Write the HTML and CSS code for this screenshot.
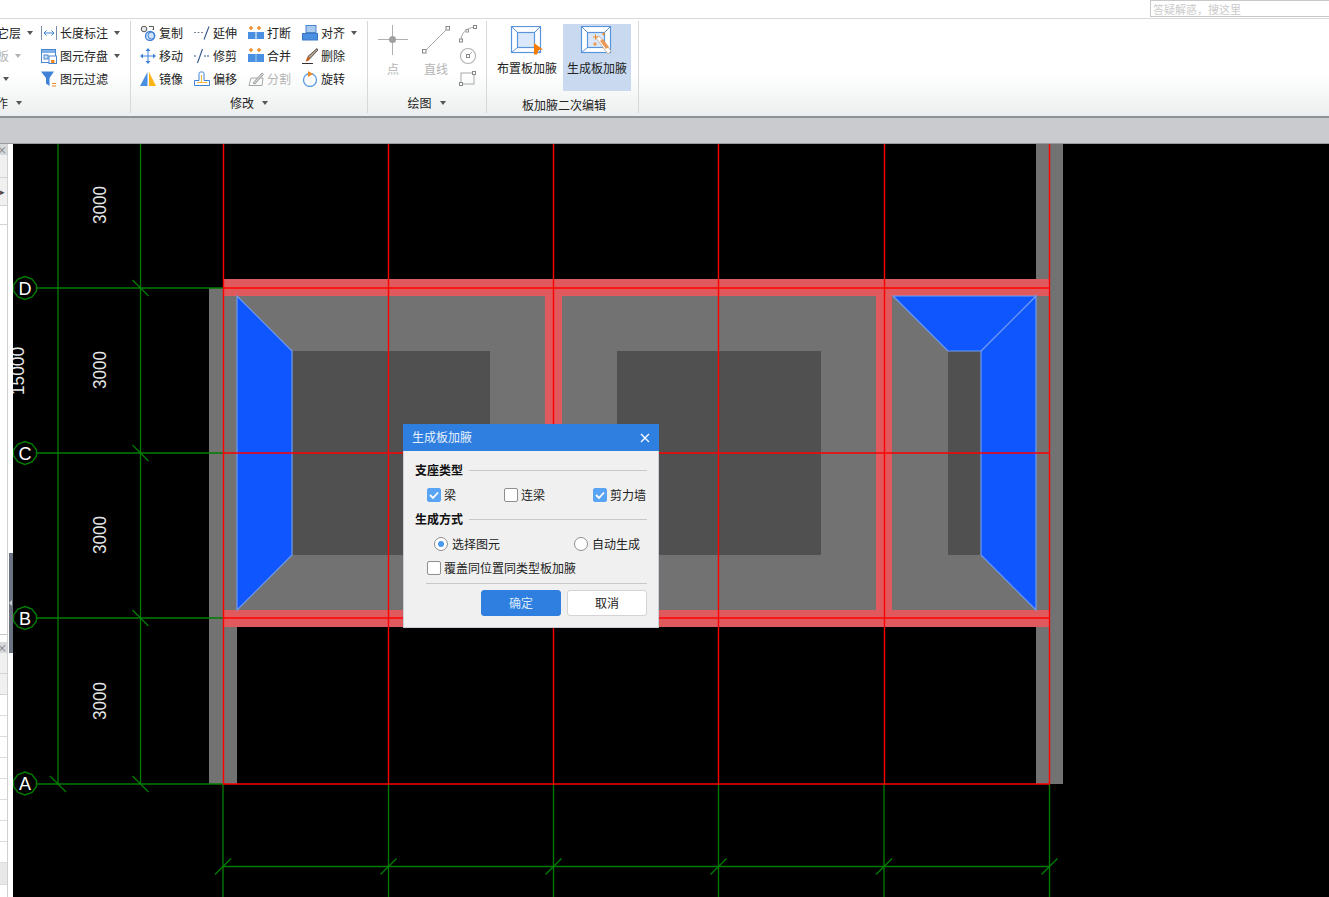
FILE: index.html
```html
<!DOCTYPE html>
<html lang="zh">
<head>
<meta charset="utf-8">
<title>生成板加腋</title>
<link rel="stylesheet" href="styles.css">
</head>
<body>
<div class="app">
  <header class="topbar">
    <div class="search">答疑解惑，搜这里</div>
  </header>

  <section class="ribbon">
    <div class="group group-a">
      <div class="tools-a">
        <div class="cut-col">
          <div class="tool cut"><span>其它层</span><i class="caret"></i></div>
          <div class="tool cut off"><span>楼板</span><i class="caret"></i></div>
          <div class="tool cut"><i class="caret"></i></div>
        </div>
        <div class="col-a">
          <div class="tool"><svg class="ico" viewBox="0 0 16 16"><path d="M.5 1v14M15.500 1v14" stroke="#7b8da6" fill="none"/><path d="M3 8h10M5.500 5.500 3 8l2.500 2.500M10.500 5.500 13 8l-2.500 2.500" stroke="#3f83d8" fill="none"/></svg><span>长度标注</span><i class="caret gap8"></i></div>
          <div class="tool"><svg class="ico" viewBox="0 0 16 16"><rect x=".5" y="1.500" width="14" height="13" fill="#fff" stroke="#4a86d0"/><rect x="1" y="2" width="13" height="3" fill="#7fb0e8"/><rect x="3" y="7" width="4" height="4" fill="#cfe0f5" stroke="#4a86d0"/><rect x="8" y="8" width="7.500" height="7.500" fill="#fff" stroke="#4a86d0"/><rect x="10" y="12" width="3.500" height="3" fill="#f08a24"/></svg><span>图元存盘</span><i class="caret gap8"></i></div>
          <div class="tool"><svg class="ico" viewBox="0 0 16 16"><path d="M0 .5h13L8.500 7v8L5 12.500V7z" fill="#3f83d8"/><path d="M11 12.500h4M11 15h4" stroke="#f08a24"/></svg><span>图元过滤</span></div>
        </div>
      </div>
      <div class="glabel glabel-a"><span>操作</span><i class="caret"></i></div>
    </div>

    <div class="group group-b">
      <div class="tools-b">
        <div class="tool"><svg class="ico" viewBox="0 0 16 16"><circle cx="4" cy="4" r="2.800" fill="#e6e8ea" stroke="#555"/><path d="M9 1.500h4.500V5M12.500 4.500 14 3" stroke="#555" fill="none"/><circle cx="10" cy="11" r="4.500" fill="#cfe2f8" stroke="#3f83d8" stroke-width="1.300"/><circle cx="11.500" cy="10.500" r="3.500" fill="none" stroke="#3f83d8"/></svg><span>复制</span></div>
        <div class="tool"><svg class="ico" viewBox="0 0 16 16"><path d="M0 7.500h10" stroke="#7c8794" stroke-dasharray="2 1.500"/><path d="M10 14.500 15 1.500" stroke="#33558a" stroke-width="1.100"/></svg><span>延伸</span></div>
        <div class="tool"><svg class="ico" viewBox="0 0 16 16"><path d="M3 1v4M1 3h4M11 1v4M9 3h4" stroke="#f08a24" stroke-width="1.400"/><rect y="7" width="7.500" height="7" fill="#4a90e2"/><rect x="8.500" y="7" width="7.500" height="7" fill="#4a90e2"/></svg><span>打断</span></div>
        <div class="tool"><svg class="ico" viewBox="0 0 16 16"><rect x="4" y=".5" width="10" height="7" fill="#a9cbf0" stroke="#4a86d0"/><rect x=".5" y="8.500" width="15" height="6.500" fill="#4a90e2" stroke="#3a78c2"/></svg><span>对齐</span><i class="caret gap8"></i></div>

        <div class="tool"><svg class="ico" viewBox="0 0 16 16"><path d="M8 0 5.500 3h5zM8 16l-2.500-3h5zM0 8l3-2.500v5zM16 8l-3-2.500v5z" fill="#3f83d8"/><path d="M8 3v10M3 8h10" stroke="#3f83d8"/></svg><span>移动</span></div>
        <div class="tool"><svg class="ico" viewBox="0 0 16 16"><path d="M0 8h3M10 8h6" stroke="#33558a" stroke-dasharray="2 1"/><path d="M3.500 15 8.500 1" stroke="#33558a" stroke-width="1.100"/></svg><span>修剪</span></div>
        <div class="tool"><svg class="ico" viewBox="0 0 16 16"><path d="M3 0v4M1 2h4M11 0v4M9 2h4" stroke="#f08a24" stroke-width="1.400"/><rect y="6" width="16" height="8" fill="#4a90e2"/><path d="M8 6v8" stroke="#a9cbf0"/></svg><span>合并</span></div>
        <div class="tool"><svg class="ico" viewBox="0 0 16 16"><path d="M15 .5 16 2 8 10.500 6 8.500z" fill="#b8a48c" stroke="#555"/><path d="M6 8.500 8 10.500C7.500 13 5 13.500 3.500 13c1.500-1 1-3.500 2.500-4.500z" fill="#c25a1c"/><path d="M0 15.500h11" stroke="#333"/></svg><span>删除</span></div>

        <div class="tool"><svg class="ico" viewBox="0 0 16 16"><path d="M7.500 1v14H0z" fill="#4a90e2"/><path d="M9 1v14h7z" fill="#fdb515"/></svg><span>镜像</span></div>
        <div class="tool"><svg class="ico" viewBox="0 0 16 16"><path d="M.5 14.500v-5h4.500V2.500a1.500 1.500 0 0 1 1.500-1.500h2A1.500 1.500 0 0 1 10 2.500v7h5.500v5z" fill="#fff" stroke="#3f83d8"/><path d="M3 12v-1h4V4h1v7h5v1z" fill="#f6b73c"/></svg><span>偏移</span></div>
        <div class="tool off"><svg class="ico" viewBox="0 0 16 16"><path d="M3 7 15 7M1 14.500h13L15 7" stroke="#a8a8a8" fill="none"/><path d="M1 14.500 3 7" stroke="#a8a8a8"/><path d="M5 12 14 2l1.500 1.500L7 13z" fill="#cfcfcf" stroke="#a0a0a0"/></svg><span>分割</span></div>
        <div class="tool"><svg class="ico" viewBox="0 0 16 16"><circle cx="8" cy="9" r="6.500" fill="none" stroke="#5b9be0" stroke-width="1.300"/><path d="M6 0v6l5-3z" fill="#f08a24"/></svg><span>旋转</span></div>
      </div>
      <div class="glabel glabel-b"><span>修改</span><i class="caret"></i></div>
    </div>

    <div class="group group-c">
      <div class="tools-c">
        <div class="bigoff pt">
          <svg class="ico-cross" viewBox="0 0 30 30"><path d="M0 14.500h30M14.500 0v30" stroke="#b0b0b0"/><circle cx="14.500" cy="14.500" r="3.500" fill="#a0a0a0"/></svg>
          <span>点</span>
        </div>
        <div class="bigoff ln">
          <svg class="ico-cross" viewBox="0 0 30 30"><path d="M3.500 26.500 26.500 3.500" stroke="#a8a8a8"/><rect x="1.500" y="24.500" width="3.500" height="3.500" fill="#fff" stroke="#888"/><rect x="25" y="1.500" width="3.500" height="3.500" fill="#fff" stroke="#888"/></svg>
          <span>直线</span>
        </div>
        <div class="small-col">
          <svg class="ico-sm" viewBox="0 0 18 18"><path d="M2 16C2 8 7 3 16 2" stroke="#a8a8a8" fill="none"/><rect x=".5" y="14" width="3" height="3" fill="#fff" stroke="#888"/><rect x="7" y="4.500" width="2.500" height="2.500" fill="#fff" stroke="#999"/><rect x="14.500" y=".5" width="3" height="3" fill="#fff" stroke="#888"/></svg>
          <svg class="ico-sm" viewBox="0 0 18 18"><circle cx="9" cy="9" r="7.500" fill="none" stroke="#b0b0b0" stroke-width="1.100"/><path d="M9 9 13 5" stroke="#aaa"/><rect x="7.500" y="7.500" width="3" height="3" fill="#fff" stroke="#888"/></svg>
          <svg class="ico-sm" viewBox="0 0 18 18"><rect x="2" y="4" width="13" height="11" fill="none" stroke="#a8a8a8"/><rect x=".5" y="13.500" width="3" height="3" fill="#fff" stroke="#888"/><rect x="13.500" y="2.500" width="3" height="3" fill="#fff" stroke="#888"/></svg>
        </div>
      </div>
      <div class="glabel"><span>绘图</span><i class="caret"></i></div>
    </div>

    <div class="group group-d">
      <div class="tools-d">
        <div class="bigbtn">
          <svg class="ico-big" viewBox="0 0 36 30"><rect x="2.500" y=".5" width="29" height="26" fill="#fff" stroke="#5a94da" stroke-width="1.200"/><rect x="8.500" y="6.500" width="17" height="15" fill="#dbe8fb" stroke="#5a94da" stroke-width="1.200"/><path d="M2.500 .5l6 6M31.500 .5l-6 6M2.500 26.500l6-5M31.500 26.500l-6-5" stroke="#5a94da"/><path d="M25 17l9 6.500-4.500 .5-1.500 4.500h-3z" fill="#f57c00"/></svg>
          <span>布置板加腋</span>
        </div>
        <div class="bigbtn on">
          <svg class="ico-big" viewBox="0 0 36 30"><rect x="2.500" y=".5" width="29" height="26" fill="#fff" stroke="#5a94da" stroke-width="1.200"/><rect x="8.500" y="6.500" width="17" height="15" fill="#dbe8fb" stroke="#5a94da" stroke-width="1.200"/><path d="M2.500 .5l6 6M31.500 .5l-6 6M2.500 26.500l6-5M31.500 26.500l-6-5" stroke="#5a94da"/><path d="M17 12l3-2 12 15-3 3z" fill="#fff" stroke="#c8b49c"/><path d="M21 15l3-2 6 8-3 2z" fill="#e89a5a"/><path d="M14 11h5M16.500 8.500v5M14 18h4M16 16v4M23 8h3M24.500 6.500v3" stroke="#f08a24"/></svg>
          <span>生成板加腋</span>
        </div>
      </div>
      <div class="glabel glabel-d">板加腋二次编辑</div>
    </div>
  </section>

  <div class="band"></div>

  <main class="work">
    <aside class="side">
      <div class="panel">
        <div class="p-head">×</div>
        <div class="p-bar h23"></div>
        <div class="p-bar h28"><span class="p-arrow">▸</span></div>
        <div class="p-white h19"></div>
        <div class="p-fill"></div>
        <div class="p-gap"></div>
        <div class="p-head">×</div>
        <div class="p-bar h21"></div>
        <div class="p-th"></div>
        <div class="p-row"></div><div class="p-row"></div><div class="p-row"></div><div class="p-row"></div>
        <div class="p-row"></div><div class="p-row"></div><div class="p-row"></div><div class="p-row"></div>
        <div class="p-row alt"></div>
      </div>
      <div class="splitter"><div class="grip"><i></i></div></div>
    </aside>

    <div class="stage">
      <svg class="cad" viewBox="13 144 1316 753" width="1316" height="753">
        <g class="solid">
          <rect x="209" y="288" width="28" height="496" class="wall"/>
          <rect x="1036" y="144" width="27" height="640" class="wall"/>
          <rect x="237" y="296" width="309" height="314" class="slab"/>
          <rect x="562" y="296" width="314" height="314" class="slab"/>
          <rect x="892" y="296" width="144" height="314" class="slab"/>
          <rect x="292" y="351" width="198" height="204" class="core"/>
          <rect x="617" y="351" width="204" height="204" class="core"/>
          <rect x="948" y="351" width="33" height="204" class="core"/>
          <rect x="223" y="279" width="826" height="17" class="beam"/>
          <rect x="223" y="610" width="826" height="17" class="beam"/>
          <rect x="545" y="296" width="17" height="314" class="beam"/>
          <rect x="876" y="296" width="16" height="314" class="beam"/>
        </g>
        <polygon class="haunch" points="237,296 292,351 292,555 237,610"/>
        <polygon class="haunch" points="1036,296 981,351 981,555 1036,610"/>
        <polygon class="haunch" points="893,296 1036,296 981,351 948,351"/>

        <g class="gl">
          <path d="M58 144V784M140.500 144V784"/>
          <path d="M13 288H223M37 453H223M37 618H223M13 784H223"/>
          <path d="M223 784V897M388.500 784V897M553.500 784V897M718.500 784V897M884 784V897M1049.500 784V897"/>
          <path d="M223 866.500H1049.500"/>
          <path d="M132.500 280 148.500 296M132.500 445 148.500 461M132.500 610 148.500 626M132.500 776 148.500 792M50 776 66 792"/>
          <path d="M215 874.500 231 858.500M380.500 874.500 396.500 858.500M545.500 874.500 561.500 858.500M710.500 874.500 726.500 858.500M876 874.500 892 858.500M1041.500 874.500 1057.500 858.500"/>
          <polygon points="25,276.500 32,279 36.500,285 36.500,291 32,297 25,299.500 18,297 13.500,291 13.500,285 18,279" class="bub"/>
          <polygon points="25,441.500 32,444 36.500,450 36.500,456 32,462 25,464.500 18,462 13.500,456 13.500,450 18,444" class="bub"/>
          <polygon points="25,606.500 32,609 36.500,615 36.500,621 32,627 25,629.500 18,627 13.500,621 13.500,615 18,609" class="bub"/>
          <polygon points="25,772 32,774.500 36.500,780.500 36.500,786.500 32,792.500 25,795 18,792.500 13.500,786.500 13.500,780.500 18,774.500" class="bub"/>
        </g>

        <g class="rl">
          <path d="M223.500 144V784M388.500 144V784M553.500 144V784M718.500 144V784M884.500 144V784M1049.500 144V784"/>
          <path d="M223 288H1050M223 453H1050M223 618H1050M223 784H1050"/>
        </g>

        <g class="dim">
          <text x="106" y="205" transform="rotate(-90 106 205)" textLength="38" lengthAdjust="spacingAndGlyphs">3000</text>
          <text x="106" y="370" transform="rotate(-90 106 370)" textLength="38" lengthAdjust="spacingAndGlyphs">3000</text>
          <text x="106" y="535" transform="rotate(-90 106 535)" textLength="38" lengthAdjust="spacingAndGlyphs">3000</text>
          <text x="106" y="701" transform="rotate(-90 106 701)" textLength="38" lengthAdjust="spacingAndGlyphs">3000</text>
          <text x="24" y="371" transform="rotate(-90 24 371)" textLength="48" lengthAdjust="spacingAndGlyphs">15000</text>
        </g>
        <g class="axis">
          <text x="25" y="295">D</text>
          <text x="25" y="460">C</text>
          <text x="25" y="625">B</text>
          <text x="25" y="790">A</text>
        </g>
      </svg>
    </div>
  </main>

  <div class="dialog">
    <div class="d-head">
      <span>生成板加腋</span>
      <svg class="d-close" viewBox="0 0 10 10"><path d="M1 1l8 8M9 1 1 9" stroke="#fff" stroke-width="1.300"/></svg>
    </div>
    <div class="d-body">
      <div class="legend"><b>支座类型</b><i></i></div>
      <div class="row-checks">
        <label class="opt"><span class="cb on"><svg viewBox="0 0 14 14"><path d="M3 7l3 3 5-5.500" fill="none" stroke="#fff" stroke-width="1.800"/></svg></span>梁</label>
        <label class="opt"><span class="cb"></span>连梁</label>
        <label class="opt"><span class="cb on"><svg viewBox="0 0 14 14"><path d="M3 7l3 3 5-5.500" fill="none" stroke="#fff" stroke-width="1.800"/></svg></span>剪力墙</label>
      </div>
      <div class="legend"><b>生成方式</b><i></i></div>
      <div class="row-radios">
        <label class="opt radio"><span class="rd on"></span>选择图元</label>
        <label class="opt radio"><span class="rd"></span>自动生成</label>
      </div>
      <div class="row-over">
        <label class="opt"><span class="cb"></span>覆盖同位置同类型板加腋</label>
      </div>
      <div class="rule"></div>
      <div class="btns">
        <button class="btn primary">确定</button>
        <button class="btn">取消</button>
      </div>
    </div>
  </div>
</div>
</body>
</html>
```

FILE: styles.css
```css
* { box-sizing: border-box; }
html, body { margin: 0; height: 100%; overflow: hidden; background: #fff; }
body { font: 12px/16px "Noto Sans CJK SC", "Liberation Sans", sans-serif; color: #222; }
.app { position: relative; width: 1329px; height: 897px; display: flex; flex-direction: column; overflow: hidden; }

.topbar { height: 19px; flex: none; border-bottom: 1px solid #d8d8d8; display: flex; justify-content: flex-end; background: #fff; }
.search { width: 179px; height: 17px; border: 1px solid #c8c8c8; border-right: 0; color: #cbcbcb; font-size: 11px; line-height: 16px; padding-left: 2px; }

.ribbon { height: 99px; flex: none; display: flex; background: linear-gradient(#fff 0, #fff 55%, #ecefef 100%); border-bottom: 2px solid #8f9295; }
.group { display: flex; flex-direction: column; flex: none; position: relative; }
.group::after { content: ""; position: absolute; right: 0; top: 2px; bottom: 3px; width: 1px; background: #d6d9d9; }
.group-a { width: 131px; }
.group-b { width: 237px; padding-left: 9px; }
.group-c { width: 119px; }
.group-d { width: 152px; }

.tool { height: 23px; display: flex; align-items: center; gap: 3px; white-space: nowrap; }
.tool.off { color: #b4b4b4; }
.ico { width: 16px; height: 16px; flex: none; }
.caret { display: inline-block; width: 0; height: 0; border: 3px solid transparent; border-top: 4px solid #555; border-bottom: 0; margin-left: 6px; flex: none; }
.off .caret { border-top-color: #b4b4b4; }
.caret.gap8 { margin-left: 3px; }

.tools-a { display: flex; height: 72px; padding-top: 2px; }
.cut-col { width: 41px; overflow: hidden; display: flex; flex-direction: column; align-items: flex-end; }
.cut { justify-content: flex-end; gap: 0; padding-right: 8px; }
.cut:nth-child(2) { padding-right: 20px; }
.cut:nth-child(3) { padding-right: 32px; }
.col-a .tool { width: 85px; }

.tools-b { display: grid; grid-template-columns: repeat(4, 54px); height: 72px; padding-top: 2px; }

.glabel { height: 22px; display: flex; align-items: center; justify-content: center; padding-right: 2px; margin-top: 1px; white-space: nowrap; }
.glabel span { flex: none; }
.glabel .caret { margin-left: 8px; }
.glabel-a { width: 24px; overflow: hidden; justify-content: flex-end; padding-right: 2px; }
.glabel-b { padding-right: 10px; }
.glabel-d { margin-top: 3px; padding-right: 0; padding-left: 2px; }

.tools-c { height: 72px; display: flex; padding: 6px 0 0 10px; }
.bigoff { display: flex; flex-direction: column; align-items: center; color: #b4b4b4; }
.bigoff span { margin-top: 6px; }
.ico-cross { width: 30px; height: 30px; flex: none; }
.pt { width: 30px; }
.ln { width: 30px; margin-left: 13px; }
.small-col { display: flex; flex-direction: column; gap: 4px; margin-left: 8px; }
.ico-sm { width: 18px; height: 18px; display: block; }

.tools-d { height: 72px; display: flex; padding: 5px 0 0 6px; gap: 2px; }
.bigbtn { width: 68px; height: 67px; display: flex; flex-direction: column; align-items: center; padding-top: 2px; }
.bigbtn.on { background: #c9daf0; }
.bigbtn span { margin-top: 4px; }
.ico-big { width: 36px; height: 30px; flex: none; }

.band { height: 26px; flex: none; background: #c9cbce; border-bottom: 1px solid #9a9da0; }

.work { flex: 1; display: flex; min-height: 0; }
.side { width: 13px; flex: none; display: flex; background: #fff; }
.panel { width: 8px; display: flex; flex-direction: column; overflow: hidden; border-right: 1px solid #d0d0d0; flex: none; }
.p-head { height: 11px; flex: none; background: #d6d8da; color: #777; font-size: 10px; line-height: 11px; overflow: hidden; text-indent: -3px; }
.p-bar { flex: none; background: #f0f0f0; border-bottom: 1px solid #d4d4d4; overflow: hidden; }
.h23 { height: 23px; }
.h28 { height: 28px; }
.h21 { height: 21px; }
.p-arrow { font-size: 9px; color: #444; line-height: 28px; }
.p-white { flex: none; background: #fff; border-bottom: 1px solid #d4d4d4; }
.h19 { height: 19px; }
.p-fill { flex: none; height: 410px; border-bottom: 1px solid #c8c8c8; background: #fff; }
.p-gap { flex: none; height: 7px; background: #fff; }
.p-th { flex: none; height: 21px; background: #f0f0f0; border-bottom: 1px solid #d4d4d4; }
.p-row { flex: none; height: 21px; background: #fff; border-bottom: 1px solid #dcdcdc; }
.p-row.alt { height: 22px; background: #e8e8e8; }
.splitter { width: 5px; flex: none; padding: 409px 0 0 1px; background: #fff; }
.grip { height: 100px; background: #6b7480; display: flex; align-items: center; }
.grip i { width: 0; height: 0; border: 3px solid transparent; border-right: 3px solid #c8ccd2; border-left: 0; }

.stage { flex: 1; min-width: 0; background: #000; overflow: hidden; }
.cad { display: block; }
.solid rect { shape-rendering: crispEdges; }
.wall, .slab { fill: #727272; }
.core { fill: #505050; }
.beam { fill: #e05a5d; }
.haunch { fill: #0f56ff; stroke: #6f9bf0; stroke-width: 1.200; }
.gl path { stroke: #007d00; stroke-width: 1.300; fill: none; }
.bub { fill: #000; stroke: #007d00; stroke-width: 1.400; }
.rl path { stroke: #f00; stroke-width: 1.400; fill: none; }
.dim text { font: 19px "Liberation Sans", sans-serif; fill: #e8e8e8; text-anchor: middle; }
.axis text { font: 18px "Liberation Sans", sans-serif; fill: #fff; text-anchor: middle; }

.dialog { position: absolute; left: 403px; top: 424px; width: 256px; height: 204px; background: #f0f0f0; border: 1px solid #c9ced4; border-top: 0; display: flex; flex-direction: column; }
.d-head { height: 27px; flex: none; margin: 0 -1px; background: #2e7fe0; color: #e8f1fc; display: flex; align-items: center; justify-content: space-between; padding: 0 9px 2px 9px; }
.d-close { width: 10px; height: 10px; margin-top: 2px; }
.d-body { flex: 1; padding: 10px 11px 0; display: flex; flex-direction: column; }
.legend { height: 18px; display: flex; align-items: center; gap: 6px; flex: none; color: #111; }
.legend b { font-weight: 700; }
.legend i { flex: 1; height: 1px; background: #c8c8c8; }
.row-checks { display: grid; grid-template-columns: 77px 89px auto; height: 18px; margin: 7px 0 6px; padding-left: 12px; flex: none; }
.row-radios { display: grid; grid-template-columns: 140px auto; height: 18px; margin-top: 7px; padding-left: 19px; flex: none; }
.row-over { height: 18px; margin-top: 7px; padding-left: 12px; flex: none; }
.opt { display: flex; align-items: center; gap: 3px; white-space: nowrap; color: #222; }
.opt.radio { gap: 4px; }
.cb { width: 14px; height: 14px; flex: none; background: #fff; border: 1px solid #8e8e8e; border-radius: 2px; display: block; }
.cb.on { background: #5aa4f5; border-color: #5aa4f5; }
.cb svg { display: block; width: 14px; height: 14px; margin: -1px; }
.rd { width: 14px; height: 14px; flex: none; background: #fff; border: 1px solid #8e8e8e; border-radius: 50%; display: flex; align-items: center; justify-content: center; }
.rd.on::after { content: ""; width: 6px; height: 6px; border-radius: 50%; background: #4a98f2; }
.rule { height: 1px; background: #c8c8c8; margin: 5px 0 0 11px; flex: none; }
.btns { display: flex; justify-content: flex-end; gap: 6px; margin-top: 6px; flex: none; }
.btn { width: 80px; height: 26px; font: inherit; line-height: 16px; color: #222; background: #fff; border: 1px solid #d4d4d4; border-radius: 3px; padding: 0; }
.btn.primary { background: #2e7fe0; border-color: #2e7fe0; color: #dce9fa; }
```
